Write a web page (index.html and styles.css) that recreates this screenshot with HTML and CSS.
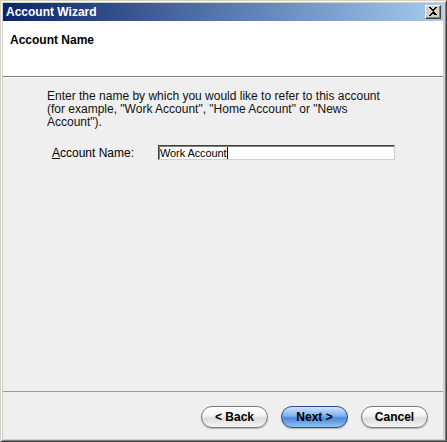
FILE: index.html
```html
<!DOCTYPE html>
<html>
<head>
<meta charset="utf-8">
<link rel="stylesheet" href="styles.css">
</head>
<body>
<div class="window">
  <div class="titlebar">
    <span class="title">Account Wizard</span>
    <span class="close"><svg width="10" height="9" viewBox="0 0 10 9"><path d="M1 0h2v1h1v1h2V1h1V0h2v1H8v1H7v1H6v1H6v1h1v1h1v1h1v1H7V8H6V7H4v1H3v1H1V8h1V7h1V6h1V5h1V4H4V3H3V2H2V1H1z" fill="#000"/></svg></span>
  </div>
  <div class="header">
    <div class="header-title">Account Name</div>
  </div>
  <div class="body">
    <p class="intro">Enter the name by which you would like to refer to this account (for example, "Work Account", "Home Account" or "News Account").</p>
    <div class="field">
      <label class="label"><u>A</u>ccount Name:</label>
      <div class="input"><span>Work Account</span><span class="caret"></span></div>
    </div>
  </div>
  <div class="footer">
    <button class="btn">&lt; Back</button>
    <button class="btn primary">Next &gt;</button>
    <button class="btn">Cancel</button>
  </div>
</div>
</body>
</html>
```
FILE: styles.css
```css
html, body {
  margin: 0;
  padding: 0;
  background: #d4d0c8;
}
.window {
  width: 447px;
  height: 442px;
  box-sizing: border-box;
  border-style: solid;
  border-width: 1px;
  border-color: #d4d0c8 #404040 #404040 #d4d0c8;
  display: flex;
  flex-direction: column;
  font-family: "Liberation Sans", Arial, sans-serif;
  font-size: 11px;
  color: #000;
  background: #d4d0c8;
  box-shadow: inset 1px 1px 0 #fff, inset -1px -1px 0 #808080;
  padding: 2px 3px 2px 2px;
}
.window > * { flex: none; }
.titlebar {
  height: 18px;
  background: linear-gradient(to right, #0a246a, #a6caf0);
  display: flex;
  align-items: center;
  justify-content: space-between;
  padding: 0 2px 0 3px;
}
.title {
  color: #fff;
  font-weight: bold;
  font-size: 12px;
}
.close {
  width: 16px;
  height: 14px;
  box-sizing: border-box;
  background: #d4d0c8;
  border: 1px solid;
  border-color: #fff #404040 #404040 #fff;
  box-shadow: inset -1px -1px 0 #808080;
  display: flex;
  align-items: center;
  justify-content: center;
}
.close svg { display: block; margin-top: -1px; }
.header {
  height: 56px;
  box-sizing: border-box;
  background: #fff;
  border-bottom: 1px solid #808080;
  padding: 12px 0 0 7px;
}
.header-title {
  font-weight: bold;
  font-size: 12px;
}
.body {
  flex: 1 1 auto;
  background: #efefef;
  border-top: 1px solid #fff;
  border-bottom: 1px solid #999;
  padding: 12px 0 0 44px;
}
.intro {
  margin: 0;
  width: 345px;
  font-size: 12px;
  line-height: 13px;
  color: #111;
}
.field {
  display: flex;
  align-items: center;
  margin-top: 16px;
  padding-left: 5px;
}
.label {
  width: 106px;
  font-size: 12px;
}
.label u { text-decoration: underline; }
.input {
  width: 237px;
  height: 15px;
  box-sizing: border-box;
  background: #fff;
  border: 1px solid;
  border-color: #404040 #d4d0c8 #d4d0c8 #404040;
  box-shadow: inset 1px 1px 0 #808080;
  display: flex;
  align-items: center;
  font-size: 11px;
  padding-left: 1px;
  letter-spacing: -0.1px;
}
.caret {
  width: 1px;
  height: 12px;
  background: #000;
  margin-left: 1px;
}
.footer {
  height: 47px;
  box-sizing: border-box;
  background: #efefef;
  display: flex;
  justify-content: flex-end;
  align-items: flex-start;
  gap: 13px;
  padding: 14px 15px 0 0;
}
.btn {
  width: 67px;
  height: 22px;
  border-radius: 11px;
  border: 1px solid #7a7a7a;
  background: linear-gradient(to bottom, #ffffff 0%, #f2f2f2 45%, #dcdcdc 55%, #f4f4f4 100%);
  font-family: "Liberation Sans", Arial, sans-serif;
  font-weight: bold;
  font-size: 12px;
  color: #000;
  padding: 0;
  box-shadow: 0 1px 1px rgba(0,0,0,0.25);
}
.btn.primary {
  border-color: #2a4f8a;
  background: linear-gradient(to bottom, #cfe3fb 0%, #7fb0ef 45%, #4f88d8 55%, #8ec4f6 100%);
}
```
